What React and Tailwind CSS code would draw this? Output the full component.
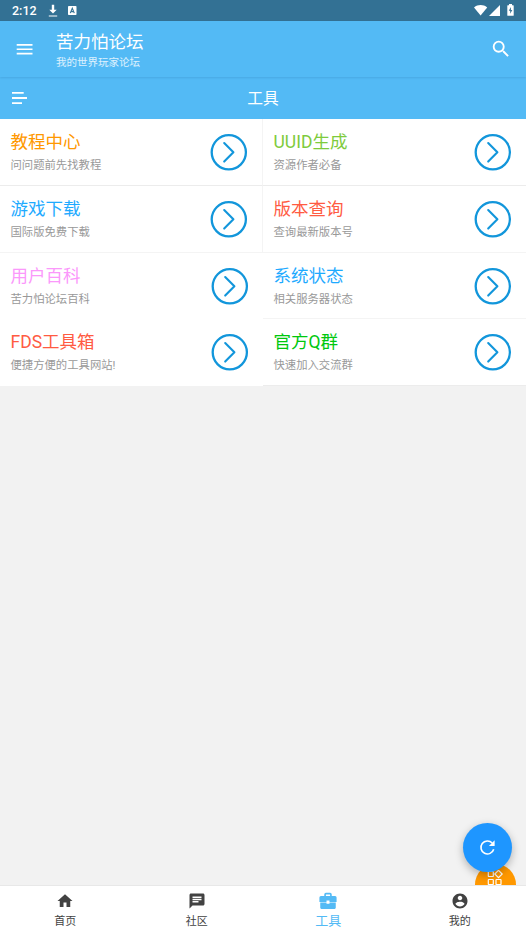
import React from "react";

const tools = [
  { title: "教程中心", desc: "问问题前先找教程", color: "text-[#ff9800]" },
  { title: "UUID生成", desc: "资源作者必备", color: "text-[#7ecb3c]" },
  { title: "游戏下载", desc: "国际版免费下载", color: "text-[#1eaaff]" },
  { title: "版本查询", desc: "查询最新版本号", color: "text-[#ff5b42]" },
  { title: "用户百科", desc: "苦力怕论坛百科", color: "text-[#fb98fb]" },
  { title: "系统状态", desc: "相关服务器状态", color: "text-[#1eaaff]" },
  { title: "FDS工具箱", desc: "便捷方便的工具网站!", color: "text-[#ff5b42]" },
  { title: "官方Q群", desc: "快速加入交流群", color: "text-[#00c80e]" },
];

// right column keeps its bottom line on every row, left one only on the first two
const cellBorders = [
  "border-r border-b border-r-[#f4f4f4] border-b-[#ececec]",
  "border-b border-[#ececec]",
  "border-r border-b border-[#f4f4f4]",
  "border-b border-[#f4f4f4]",
  "",
  "border-b border-[#f4f4f4]",
  "",
  "border-b border-[#ececec]",
];

const ArrowCircle = () => (
  <svg className="h-[38px] w-[38px]" viewBox="0 0 38 38" fill="none" stroke="#1296db">
    <circle cx="18.8" cy="19.3" r="17.1" strokeWidth="2.3" />
    <path d="M14.2 10L23.4 19.3L14.2 28.6" strokeWidth="2.1" strokeLinecap="round" strokeLinejoin="round" />
  </svg>
);

const StatusBar = () => (
  <div className="flex h-[21px] items-center bg-[#337194] text-white">
    <span className="ml-3 w-[36px] pt-[1px] font-['Roboto',sans-serif] text-[12.5px] leading-none font-medium">
      2:12
    </span>
    <svg className="h-[13px] w-[10px]" viewBox="0 0 10 13" fill="currentColor">
      <path d="M3.8 0.8h2.4v5h2.5L5 9.6L1.3 5.8h2.5zM0.8 11.4h8.4v1.1H0.8z" />
    </svg>
    <svg className="ml-[10px] h-[9px] w-[9px]" viewBox="0 0 9 9">
      <rect width="8.5" height="9" rx="0.8" fill="#fff" />
      <path d="M2.3 7.1L4.3 2.2L6.3 7.1M3 5.6h2.6" fill="none" stroke="#337194" strokeWidth="1.1" />
    </svg>
    <div className="mr-3 ml-auto flex items-center">
      <svg className="h-[11px] w-[14px]" viewBox="0 0 14 11" fill="currentColor">
        <path d="M0 2.4C4 -0.7 9.2 -0.7 13.2 2.4L6.6 10.5z" />
      </svg>
      <svg className="ml-[1px] h-[11px] w-[12px]" viewBox="0 0 12 11" fill="currentColor">
        <path d="M11 0v11H0z" />
      </svg>
      <svg className="mb-[1px] ml-[6px] h-[12px] w-[7px]" viewBox="0 0 7 12">
        <path d="M2 0h3v1.2h1.2q.5 0 .5.5v9.6q0 .5-.5.5H.8q-.5 0-.5-.5V1.7q0-.5.5-.5H2z" fill="#fff" />
        <path d="M3.9 3L1.8 6.8h1.4v3L5.3 6H3.9z" fill="#337194" />
      </svg>
    </div>
  </div>
);

const Header = () => (
  <header className="relative z-10 flex h-14 items-center bg-[#53baf5] text-white shadow-[0_1px_2px_rgba(0,60,110,0.14)]">
    <svg className="ml-[16px] h-4 w-[17px]" viewBox="0 0 17 16" fill="currentColor">
      <path d="M0.7 3h15.8v1.7H0.7zM0.7 7.4h15.8v1.7H0.7zM0.7 11.8h15.8v1.7H0.7z" />
    </svg>
    <div className="ml-[23px]">
      <h1 className="mt-[3px] text-[17.5px] leading-[21px]">苦力怕论坛</h1>
      <p className="mt-[3px] text-[10.5px] leading-[14px] text-white/80">我的世界玩家论坛</p>
    </div>
    <svg className="mr-[14px] ml-auto h-[22px] w-[22px]" viewBox="0 0 24 24" fill="currentColor">
      <path d="M15.5 14h-.79l-.28-.27A6.471 6.471 0 0 0 16 9.5 6.5 6.5 0 1 0 9.5 16c1.61 0 3.09-.59 4.23-1.57l.27.28v.79l5 4.99L20.49 19l-4.99-5zm-6 0C7.01 14 5 11.99 5 9.5S7.01 5 9.5 5 14 7.01 14 9.5 11.99 14 9.5 14z" />
    </svg>
  </header>
);

const ToolBar = () => (
  <div className="grid h-[42px] grid-cols-3 items-center bg-[#53baf5] text-white">
    <svg className="ml-[12px] h-[14px] w-[16px]" viewBox="0 0 16 14" fill="currentColor">
      <path d="M0 1h11.7v1.8H0zM0 6.1h15v1.8H0zM0 11.2h10v1.8H0z" />
    </svg>
    <h2 className="pt-[1px] text-center text-[15.75px] leading-5">工具</h2>
  </div>
);

const navItems = [
  {
    label: "首页",
    icon: "M10 20v-6h4v6h5v-8h3L12 3 2 12h3v8z",
  },
  {
    label: "社区",
    icon: "M20 2H4c-1.1 0-1.99.9-1.99 2L2 22l4-4h14c1.1 0 2-.9 2-2V4c0-1.1-.9-2-2-2zM6 9h12v2H6V9zm8 5H6v-2h8v2zm4-6H6V6h12v2z",
  },
  {
    label: "工具",
    active: true,
    icon: "M7.5 6V4.2Q7.5 2.2 9.5 2.2h5Q16.5 2.2 16.5 4.2V6H20.5Q22.3 6 22.3 7.8V13.1H13.8V11.3H10.2V13.1H1.7V7.8Q1.7 6 3.5 6zM9.5 6h5V4.2h-5zM2.7 13.7H10.2V15.2H13.8V13.7H21.3V20.2Q21.3 21.5 20 21.5H4Q2.7 21.5 2.7 20.2z",
  },
  {
    label: "我的",
    icon: "M12 2C6.48 2 2 6.48 2 12s4.48 10 10 10 10-4.48 10-10S17.52 2 12 2zm0 3c1.66 0 3 1.34 3 3s-1.34 3-3 3-3-1.34-3-3 1.34-3 3-3zm0 14.2c-2.5 0-4.71-1.28-6-3.22.03-1.99 4-3.08 6-3.08 1.99 0 5.97 1.09 6 3.08-1.29 1.94-3.5 3.22-6 3.22z",
  },
];

const BottomNav = () => (
  <nav className="grid h-[50px] grid-cols-4 border-t border-[#e8e8e8] bg-white">
    {navItems.map((item) => (
      <div
        key={item.label}
        className={`flex flex-col items-center pr-[1px] ${item.active ? "text-[#53baf5]" : "text-[#424242]"}`}
      >
        <svg
          className={item.active ? "mt-[5px] h-5 w-5" : "mt-[6px] h-[18px] w-[18px]"}
          viewBox="0 0 24 24"
          fill="currentColor"
          fillRule="evenodd"
        >
          <path d={item.icon} />
        </svg>
        <span className={item.active ? "mt-[1px] text-[13px] leading-[18px]" : "mt-[4px] text-[11px] leading-4"}>
          {item.label}
        </span>
      </div>
    ))}
  </nav>
);

const App = () => {
  return (
    <div className="flex h-[935px] w-[526px] flex-col overflow-hidden bg-[#f2f2f2] font-['Roboto','Noto_Sans_CJK_SC',sans-serif]">
      <StatusBar />
      <Header />
      <ToolBar />

      <main className="relative flex-1 overflow-hidden">
        <div className="grid grid-cols-2 grid-rows-[67px_67px_66px_67px]">
          {tools.map((tool, i) => (
            <div key={tool.title} className={`flex justify-between bg-white pr-[14px] pl-[10.5px] ${cellBorders[i]}`}>
              <div className="pt-[12px]">
                <h3 className={`text-[17.5px] leading-[23px] ${tool.color}`}>{tool.title}</h3>
                <p className="mt-[3px] text-[11.35px] leading-4 text-[#999]">{tool.desc}</p>
              </div>
              <div className="pt-[14px]">
                <ArrowCircle />
              </div>
            </div>
          ))}
        </div>

        {/* Floating buttons, the orange one is tucked behind the nav */}
        <div className="absolute right-[10px] -bottom-[20px] flex h-[41px] w-[41px] justify-center rounded-full bg-[#ff9800]">
          <svg className="mt-[6px] mr-[1px] h-4 w-4" viewBox="0 0 16 16" fill="none" stroke="#fff" strokeWidth="1.2">
            <rect x="1.3" y="1.5" width="5" height="5" rx="0.6" />
            <path d="M11.5 0.3L15.2 4L11.5 7.7L7.8 4z" />
            <rect x="1.3" y="9.5" width="5" height="5" rx="0.6" />
            <rect x="9" y="9.5" width="5" height="5" rx="0.6" />
          </svg>
        </div>
      </main>

      <div className="relative">
        <button className="absolute right-[14px] bottom-[63px] flex h-[49px] w-[49px] items-center justify-center rounded-full bg-[#1e96ff] shadow-[0_3px_8px_rgba(0,0,0,0.28)]">
          <svg className="h-[17px] w-[17px]" viewBox="0 0 17 17" fill="none" stroke="#fff" strokeWidth="1.6">
            <path d="M13.2 4A6.5 6.5 0 1 0 14.7 10.2" />
            <path d="M15.6 1.3V7H9.900z" fill="#fff" stroke="none" />
          </svg>
        </button>
        <BottomNav />
      </div>
    </div>
  );
};

export default App;
